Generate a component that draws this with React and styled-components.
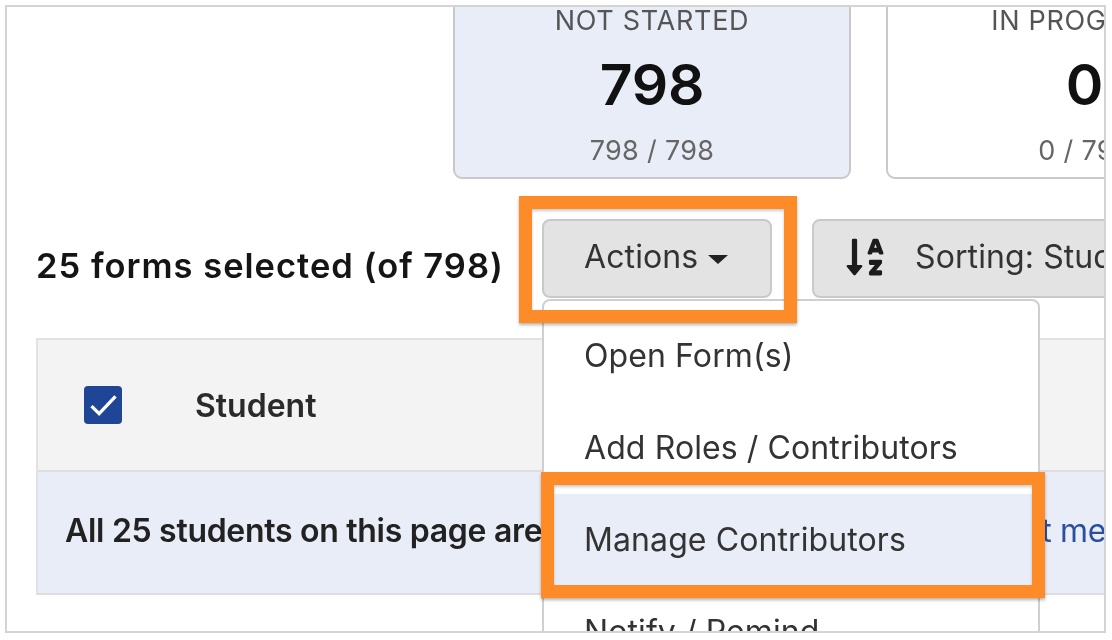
import React from "react";
import styled, { createGlobalStyle } from "styled-components";
import { FaSortAlphaDown } from "react-icons/fa";

const Global = createGlobalStyle`
  html, body { margin: 0; padding: 0; background: #fff; overflow: hidden; }
  * { box-sizing: border-box; }
`;

const Frame = styled.div`
  position: relative;
  width: 1101px;
  height: 628px;
  margin: 5px 0 0 5px;
  border: 2px solid #d4d4d4;
  overflow: hidden;
  background: #fff;
  font-family: Inter, Lato, "Liberation Sans", sans-serif;
  color: #222;
  filter: blur(0.45px);
`;

const Cards = styled.div`
  display: flex;
  gap: 35px;
  margin-top: -24px;
  padding-left: 446px;
  width: 1600px;
`;

const Card = styled.div`
  width: ${(p) => p.$w}px;
  flex: none;
  height: 196px;
  border: 2px solid #c9c9c9;
  border-radius: 9px;
  background: ${(p) => (p.$active ? "#e9edf7" : "#fff")};
  display: flex;
  flex-direction: column;
  align-items: center;
  padding-top: 19px;
`;

const CardLabel = styled.div`
  font-size: 27px;
  line-height: 33px;
  color: #555;
  letter-spacing: 0.7px;
`;

const CardValue = styled.div`
  font-size: 57px;
  line-height: 62px;
  font-weight: 600;
  color: #111;
  margin-top: 17px;
  letter-spacing: -0.2px;
`;

const CardSub = styled.div`
  font-size: 27px;
  line-height: 33px;
  color: #666;
  margin-top: 18px;
  letter-spacing: 0.3px;
`;

const Toolbar = styled.div`
  display: flex;
  align-items: flex-start;
  margin-top: 40px;
  padding-left: 29px;
  width: 1600px;
`;

const Selected = styled.div`
  font-size: 34.5px;
  line-height: 40px;
  font-weight: 600;
  color: #151515;
  width: 506px;
  margin-top: 27px;
  letter-spacing: 1px;
  white-space: nowrap;
`;

const Button = styled.div`
  flex: none;
  width: ${(p) => p.$w}px;
  height: 79px;
  background: #e3e3e3;
  border: 2px solid #c9c9c9;
  border-radius: 8px;
  display: flex;
  align-items: center;
  gap: ${(p) => p.$gap}px;
  padding-left: ${(p) => p.$pad}px;
  padding-bottom: 4px;
  margin-right: 40px;
  font-size: 32px;
  color: #333;
  letter-spacing: 0.1px;
  white-space: nowrap;
`;

const Caret = styled.span`
  width: 0;
  height: 0;
  border-left: 10px solid transparent;
  border-right: 10px solid transparent;
  border-top: 9px solid #222;
  margin-top: 5px;
`;

const SortIcon = styled(FaSortAlphaDown)`
  font-size: 42px;
  color: #1c1c1c;
  flex: none;
`;

const Table = styled.div`
  margin: 40px 0 0 29px;
  width: 1500px;
  border: 2px solid #e2e2e2;
  border-bottom: none;
`;

const HeadRow = styled.div`
  height: 132px;
  background: #f3f3f3;
  display: flex;
  align-items: center;
  padding-left: 46px;
  gap: 73px;
  border-bottom: 2px solid #dedede;
`;

const Check = styled.div`
  width: 38px;
  height: 38px;
  border-radius: 4px;
  background: #1f4596;
  display: flex;
  align-items: center;
  justify-content: center;
`;

const HeadText = styled.div`
  font-size: 32px;
  font-weight: 600;
  color: #2a2a2a;
`;

const NoticeRow = styled.div`
  height: 123px;
  background: #e9edf7;
  display: flex;
  align-items: center;
  padding-left: 27px;
  padding-bottom: 4px;
  border-bottom: 2px solid #dedede;
  font-size: 32px;
  font-weight: 600;
  letter-spacing: -0.3px;
  color: #222;
  white-space: nowrap;
`;

const NoticeLink = styled.span`
  color: #2a4f9e;
  font-weight: 400;
  margin-left: 269px;
`;

const Menu = styled.div`
  position: absolute;
  left: 535px;
  top: 292px;
  width: 498px;
  height: 360px;
  background: #fff;
  border: 2px solid #cfcfcf;
  border-radius: 8px;
  padding-top: 9px;
`;

const MenuItem = styled.div`
  height: 92px;
  display: flex;
  align-items: center;
  padding-left: 40px;
  padding-bottom: 2px;
  font-size: 32px;
  letter-spacing: 0.1px;
  color: #333;
  background: ${(p) => (p.$active ? "#e9edf7" : "transparent")};
`;

const Highlight = styled.div`
  position: absolute;
  left: ${(p) => p.$l}px;
  top: ${(p) => p.$t}px;
  width: ${(p) => p.$w}px;
  height: ${(p) => p.$h}px;
  border: 13px solid #fd8b27;
  box-shadow: 0 2px 3px rgba(0, 0, 0, 0.3), inset 0 2px 3px rgba(0, 0, 0, 0.2);
`;

export default function App() {
  return (
    <>
      <Global />
      <Frame>
        <Cards>
          <Card $w={398} $active>
            <CardLabel>NOT STARTED</CardLabel>
            <CardValue>798</CardValue>
            <CardSub>798 / 798</CardSub>
          </Card>
          <Card $w={397}>
            <CardLabel>IN PROGRESS</CardLabel>
            <CardValue>0</CardValue>
            <CardSub>0 / 798</CardSub>
          </Card>
        </Cards>
        <Toolbar>
          <Selected>25 forms selected (of 798)</Selected>
          <Button $w={230} $pad={40} $gap={10}>
            Actions <Caret />
          </Button>
          <Button $w={500} $pad={30} $gap={29}>
            <SortIcon /> Sorting: Student Name
          </Button>
        </Toolbar>
        <Table>
          <HeadRow>
            <Check>
              <svg width="29" height="24" viewBox="0 0 26 22" fill="none">
                <path d="M2 12 L9 19 L24 3" stroke="#fff" strokeWidth="3" />
              </svg>
            </Check>
            <HeadText>Student</HeadText>
          </HeadRow>
          <NoticeRow>
            All 25 students on this page are selected.
            <NoticeLink>Select me</NoticeLink>
          </NoticeRow>
        </Table>
        <Menu>
          <MenuItem>Open Form(s)</MenuItem>
          <MenuItem>Add Roles / Contributors</MenuItem>
          <MenuItem $active>Manage Contributors</MenuItem>
          <MenuItem>Notify / Remind</MenuItem>
        </Menu>
        <Highlight $l={512} $t={189} $w={278} $h={127} />
        <Highlight $l={534} $t={465} $w={504} $h={126} />
      </Frame>
    </>
  );
}
